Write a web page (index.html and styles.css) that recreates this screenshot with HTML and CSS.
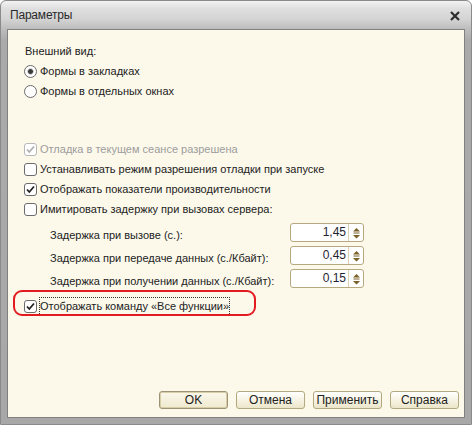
FILE: index.html
```html
<!DOCTYPE html>
<html lang="ru">
<head>
<meta charset="utf-8">
<link rel="stylesheet" href="styles.css">
</head>
<body>
<div class="window">
  <div class="titlebar">
    <span class="title">Параметры</span>
    <svg class="close" width="10" height="10" viewBox="0 0 10 10"><path d="M1 1 L9 9 M9 1 L1 9" stroke="#2e2e2e" stroke-width="2.2" fill="none"/></svg>
  </div>
  <div class="client">
    <div class="form">
      <div class="row heading">Внешний вид:</div>
      <div class="row"><span class="radio checked"></span>Формы в закладках</div>
      <div class="row"><span class="radio"></span>Формы в отдельных окнах</div>
      <div class="row disabled gap-top"><span class="cb"><svg width="13" height="13" viewBox="0 0 13 13"><path d="M3 6.5 L5.3 9 L10 3.5" stroke="#b0b0b0" stroke-width="1.8" fill="none"/></svg></span>Отладка в текущем сеансе разрешена</div>
      <div class="row"><span class="cb"></span>Устанавливать режим разрешения отладки при запуске</div>
      <div class="row"><span class="cb"><svg width="13" height="13" viewBox="0 0 13 13"><path d="M3 6.5 L5.3 9 L10 3.5" stroke="#222" stroke-width="1.8" fill="none"/></svg></span>Отображать показатели производительности</div>
      <div class="row"><span class="cb"></span>Имитировать задержку при вызовах сервера:</div>
      <div class="spin-rows">
        <div class="spin-row"><span class="spin-label">Задержка при вызове (с.):</span><div class="spin"><span class="val">1,45</span><span class="btns"><svg width="9" height="14" viewBox="0 0 9 14"><path d="M4.5 2 L8 5.5 L1 5.5 Z M1 9 L8 9 L4.5 12.5 Z" fill="#7a6128"/><path d="M1.5 7 H7.5" stroke="#7a6128" stroke-width="1"/></svg></span></div></div>
        <div class="spin-row"><span class="spin-label">Задержка при передаче данных (с./Кбайт):</span><div class="spin"><span class="val">0,45</span><span class="btns"><svg width="9" height="14" viewBox="0 0 9 14"><path d="M4.5 2 L8 5.5 L1 5.5 Z M1 9 L8 9 L4.5 12.5 Z" fill="#7a6128"/><path d="M1.5 7 H7.5" stroke="#7a6128" stroke-width="1"/></svg></span></div></div>
        <div class="spin-row"><span class="spin-label">Задержка при получении данных (с./Кбайт):</span><div class="spin"><span class="val">0,15</span><span class="btns"><svg width="9" height="14" viewBox="0 0 9 14"><path d="M4.5 2 L8 5.5 L1 5.5 Z M1 9 L8 9 L4.5 12.5 Z" fill="#7a6128"/><path d="M1.5 7 H7.5" stroke="#7a6128" stroke-width="1"/></svg></span></div></div>
      </div>
      <div class="row last"><span class="cb"><svg width="13" height="13" viewBox="0 0 13 13"><path d="M3 6.5 L5.3 9 L10 3.5" stroke="#222" stroke-width="1.8" fill="none"/></svg></span><span class="focus">Отображать команду «Все функции»</span><span class="annot"></span></div>
    </div>
    <div class="buttons">
      <span class="btn default">OK</span>
      <span class="btn">Отмена</span>
      <span class="btn">Применить</span>
      <span class="btn">Справка</span>
    </div>
  </div>
</div>
</body>
</html>
```

FILE: styles.css
```css
* { box-sizing: border-box; }
html, body { margin: 0; padding: 0; background: #ffffff; }
body { font-family: "Liberation Sans", Arial, sans-serif; font-size: 11px; color: #222; }

.window {
  width: 472px;
  height: 425px;
  border: 1px solid #8a8a8a;
  border-radius: 6px 6px 0 0;
  background: linear-gradient(#f2f2f2 0px, #dedede 8px, #d4d4d4 18px, #bdbdbd 28px, #aaaaaa 40px, #a8a8a8 100%);
  display: flex;
  flex-direction: column;
  padding: 0 6px 6px 6px;
}

.titlebar {
  height: 28px;
  display: flex;
  align-items: center;
  justify-content: space-between;
  padding: 0 4px 0 3px;
  flex: none;
}
.title { font-size: 12px; color: #2a2a2a; letter-spacing: -0.2px; }
.close { margin-top: 1px; margin-right: 1px; }

.client {
  flex: 1;
  background: #fcf9eb;
  border: 1px solid #808080;
  display: flex;
  flex-direction: column;
  justify-content: space-between;
  padding: 11px 5px 8px 16px;
}

.form { display: flex; flex-direction: column; }
.row {
  height: 20px;
  display: flex;
  align-items: center;
  white-space: nowrap;
  position: relative;
}
.heading { padding-left: 1px; }
.gap-top { margin-top: 38px; }
.disabled { color: #9c9c9c; }

.radio {
  width: 13px; height: 13px;
  border-radius: 50%;
  border: 1px solid #6b6b6b;
  background: #fff;
  margin-right: 3px;
  flex: none;
}
.radio.checked { background: radial-gradient(circle, #3a3a3a 0 2px, #9a9a9a 2.5px, #fff 3.5px); }

.cb {
  width: 13px; height: 13px;
  border: 1px solid #6b6b6b;
  border-radius: 3px;
  background: #fff;
  margin-right: 3px;
  flex: none;
  display: flex;
}
.cb svg { margin: -1px; }
.disabled .cb { border-color: #b8b8b8; }

.spin-rows { display: flex; flex-direction: column; gap: 4px; padding-left: 26px; margin-top: 4px; }
.spin-row { display: flex; align-items: center; justify-content: space-between; width: 314px; height: 19px; }
.spin-label { white-space: nowrap; padding-top: 4px; }
.spin {
  width: 74px; height: 19px;
  border: 1px solid #b6a97f;
  border-radius: 3px;
  background: #fff;
  display: flex;
}
.val { flex: 1; text-align: right; padding-right: 2px; line-height: 17px; font-size: 12px; color: #1f1f33; }
.btns {
  width: 15px;
  border-left: 1px solid #d9d1b4;
  display: flex; align-items: center; justify-content: center;
}

.last { margin-top: 8px; }
.focus { outline: 1px dotted #333; outline-offset: 0; padding: 1px 0; line-height: 15px; }
.annot {
  position: absolute;
  left: -11px;
  top: -6px;
  width: 243px;
  height: 26px;
  border: 2.5px solid #e31a1f;
  border-radius: 9px;
}

.buttons { display: flex; justify-content: flex-end; gap: 8px; }
.btn {
  width: 69px; height: 18px;
  border: 1px solid #b3a97f;
  border-radius: 3px;
  background: linear-gradient(#ffffff, #f5f1de 60%, #ebe5c9);
  display: flex; align-items: center; justify-content: center;
  font-size: 12px; color: #222;
}
.btn.default { border-color: #9d9374; box-shadow: inset 0 0 0 1px #d8cfa8; background: linear-gradient(#fbf8ea, #efe9cf); }
```
